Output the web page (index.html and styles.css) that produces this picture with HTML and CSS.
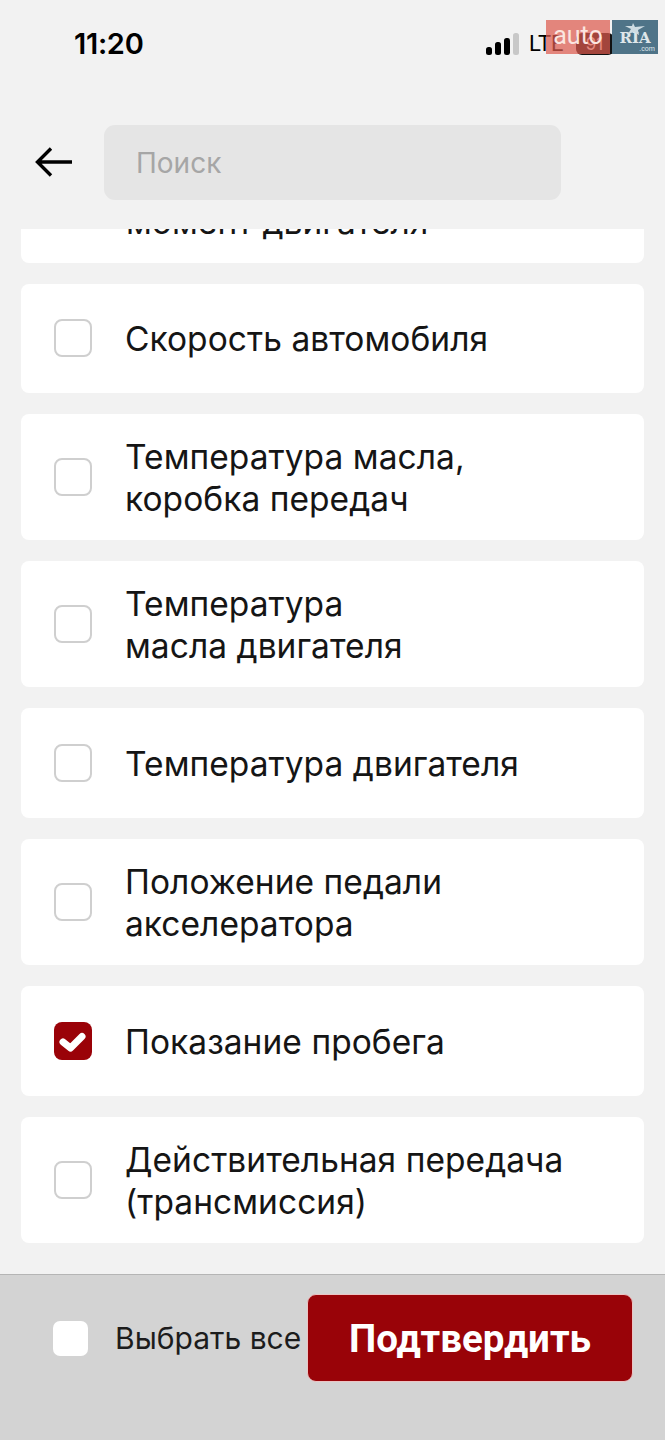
FILE: index.html
```html
<!DOCTYPE html>
<html lang="ru">
<head>
<meta charset="utf-8">
<title>Поиск</title>
<link rel="stylesheet" href="styles.css">
</head>
<body>
<div class="screen">
  <div class="status">
    <span class="time">11:20</span>
    <div class="status-right">
      <svg class="signal" width="34" height="22" viewBox="0 0 34 22"><rect x="0" y="14" width="6" height="8" rx="2.5" fill="#000"/><rect x="9" y="9" width="6" height="13" rx="2.5" fill="#000"/><rect x="18" y="5" width="6" height="17" rx="2.5" fill="#000"/><rect x="27" y="0" width="6" height="22" rx="2.5" fill="#c8c8c8"/></svg>
      <span class="lte">LTE</span>
      <span class="battery">91</span>
    </div>
  </div>
  <div class="logo">
    <span class="logo-auto">auto</span>
    <span class="logo-ria">
      <svg class="logo-star" width="22" height="12" viewBox="0 0 22 12"><path d="M9 0l2 4 10-1-7 4 1 5-5-3-6 2 3-5-6-3 7 0z" fill="#cfdde3"/></svg>
      RIA<small class="logo-com">.com</small>
    </span>
  </div>
  <header class="head">
    <svg class="back" width="38" height="32" viewBox="0 0 38 32"><path d="M37 16H3M16 2.500L2.500 16 16 29.500" fill="none" stroke="#000" stroke-width="3.400"/></svg>
    <div class="search">Поиск</div>
  </header>
  <main class="list">
    <div class="card card-cut"><span class="box"></span><span class="label">Крутящий<br>момент двигателя</span></div>
    <div class="card"><span class="box"></span><span class="label">Скорость автомобиля</span></div>
    <div class="card"><span class="box"></span><span class="label">Температура масла,<br>коробка передач</span></div>
    <div class="card"><span class="box"></span><span class="label">Температура<br>масла двигателя</span></div>
    <div class="card"><span class="box"></span><span class="label">Температура двигателя</span></div>
    <div class="card"><span class="box"></span><span class="label">Положение педали<br>акселератора</span></div>
    <div class="card"><span class="box box-on"><svg width="38" height="38" viewBox="0 0 38 38"><path d="M9 20L16.500 26 28 14.500" fill="none" stroke="#fff" stroke-width="7" stroke-linecap="round" stroke-linejoin="round"/></svg></span><span class="label">Показание пробега</span></div>
    <div class="card"><span class="box"></span><span class="label">Действительная передача<br>(трансмиссия)</span></div>
  </main>
  <footer class="foot">
    <span class="foot-box"></span>
    <span class="foot-label">Выбрать все</span>
    <button class="confirm">Подтвердить</button>
  </footer>
</div>
</body>
</html>
```
FILE: styles.css
```css
* { box-sizing: border-box; }
html, body { margin: 0; padding: 0; }
body { font-family: Inter, Roboto, sans-serif; background: #f2f2f2; color: #111; }
.screen { position: relative; width: 665px; height: 1440px; overflow: hidden; display: flex; flex-direction: column; background: #f2f2f2; }
.status { height: 88px; padding: 26px 0 0 74px; display: flex; justify-content: space-between; align-items: flex-start; }
.time { font-size: 29px; line-height: 36px; font-weight: 600; color: #000; letter-spacing: -0.3px; }
.status-right { display: flex; align-items: center; gap: 9px; margin-top: 7px; padding-right: 51px; width: 179px; height: 22px; }
.signal { flex: none; }
.lte { font-size: 22px; line-height: 22px; color: #000; font-family: Roboto, sans-serif; }
.battery { width: 38px; height: 22px; border-radius: 6px; background: #111; color: #fff; font-size: 17px; line-height: 22px; text-align: center; flex: none; margin-left: 3px; }
.logo { position: absolute; left: 546px; top: 20px; width: 112px; height: 34px; display: flex; justify-content: space-between; }
.logo-auto { width: 64px; height: 34px; background: rgba(220, 90, 78, 0.72); color: #fbe6e0; font-family: Roboto, sans-serif; font-size: 25px; line-height: 32px; text-align: center; }
.logo-ria { position: relative; width: 46px; height: 34px; background: #4f7488; color: #dfe7ea; font-family: "DejaVu Serif", "Liberation Serif", serif; font-weight: 700; font-size: 15px; line-height: 36px; text-align: center; }
.logo-star { position: absolute; left: 12px; top: 3px; }
.logo-com { position: absolute; right: 3px; bottom: 1px; font-family: Roboto, sans-serif; font-size: 7px; line-height: 8px; font-weight: 400; }
.head { height: 141px; padding: 0 0 0 35px; display: flex; align-items: flex-start; }
.back { flex: none; margin-top: 58px; }
.search { width: 457px; height: 75px; margin: 37px 0 0 31px; padding-left: 32px; background: #e5e5e5; border-radius: 11px; color: #a6a6a6; font-size: 28px; line-height: 76px; }
.list { flex: 1; padding: 0 21px; display: flex; flex-direction: column; gap: 21px; overflow: hidden; }
.card { flex: none; min-height: 109.67px; padding: 21px 16px 21px 33px; display: flex; align-items: center; gap: 33px; background: #fff; border-radius: 8px; }
.card-cut { height: 33.67px; min-height: 33.67px; padding: 0 16px 0 105px; align-items: flex-end; border-radius: 0 0 8px 8px; }
.card-cut .box { display: none; }
.card-cut .label { margin-bottom: 20px; }
.box { flex: none; width: 38px; height: 38px; border: 2px solid #cfcfcf; border-radius: 8px; background: #fff; }
.box-on { border: 0; background: #9a0208; }
.box-on svg { display: block; }
.label { padding-top: 1px; margin-bottom: -1px; font-size: 33.500px; letter-spacing: 0.05px; line-height: 42px; color: #151515; white-space: nowrap; }
.foot { height: 166px; flex: none; border-top: 1px solid #b5b5b5; background: #d3d3d3; padding: 19px 0 0 53px; display: flex; align-items: flex-start; }
.foot-box { flex: none; width: 35px; height: 35px; margin-top: 27px; border-radius: 7px; background: #fff; }
.foot-label { margin: 25px 0 0 27px; width: 192px; font-size: 30px; line-height: 38px; white-space: nowrap; color: #1c1c1c; }
.confirm { width: 326px; height: 88px; margin-left: 0; border: 1px solid #ecc4c4; border-radius: 9px; background: #990308; color: #fff; font-family: Roboto, sans-serif; font-size: 38.500px; font-weight: 700; padding: 0; flex: none; }
```
